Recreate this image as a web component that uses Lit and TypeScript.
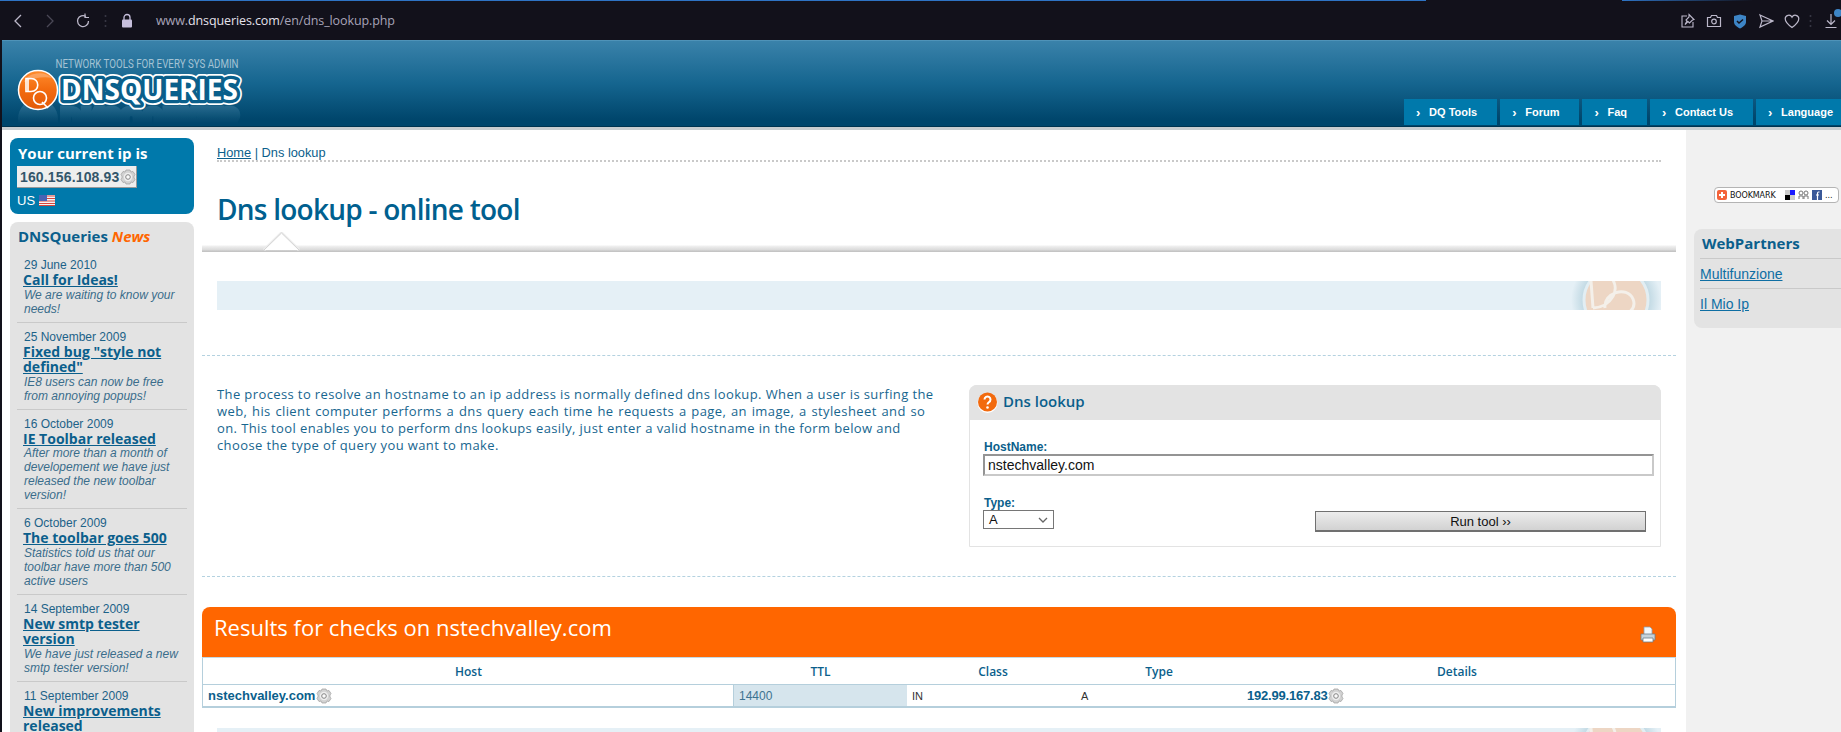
import { LitElement, css, html, svg } from 'lit';
import { customElement } from 'lit/decorators.js';

const news = [
	{ date: '29 June 2010', title: 'Call for Ideas!', text: 'We are waiting to know your needs!' },
	{ date: '25 November 2009', title: 'Fixed bug "style not defined"', text: 'IE8 users can now be free from annoying popups!' },
	{ date: '16 October 2009', title: 'IE Toolbar released', text: 'After more than a month of developement we have just released the new toolbar version!' },
	{ date: '6 October 2009', title: 'The toolbar goes 500', text: 'Statistics told us that our toolbar have more than 500 active users' },
	{ date: '14 September 2009', title: 'New smtp tester version', text: 'We have just released a new smtp tester version!' },
	{ date: '11 September 2009', title: 'New improvements released', text: '' },
];

const navItems = ['DQ Tools', 'Forum', 'Faq', 'Contact Us', 'Language'];

const gear = html`<svg class="gear" viewBox="0 0 16 16" width="16" height="16">
	<path d="M6 1h4l1 2 2-.5 2 3-1 1.500v2l1 1.500-2 3-2-.5-1 2H6l-1-2-2 .5-2-3 1-1.500V7L1 5.500l2-3 2 .5z" fill="#d2d2d2" stroke="#9c9c9c" stroke-width=".7"/>
	<circle cx="8" cy="8" r="4.200" fill="#efefef"/>
	<circle cx="8" cy="8" r="2.300" fill="#fafafa" stroke="#858585"/>
</svg>`;

const watermark = html`<svg class="mark" viewBox="0 0 100 29" width="100" height="29">
	<defs>
		<radialGradient id="halo">
			<stop offset=".75" stop-color="#c4dbe5"/>
			<stop offset="1" stop-color="#e5f0f6"/>
		</radialGradient>
	</defs>
	<circle cx="55" cy="19" r="45" fill="url(#halo)"/>
	<circle cx="55" cy="19" r="32" fill="#edd6c4" stroke="#e2eef3" stroke-width="3"/>
	<path d="M30 0 32 27M32 27C50 26 62 8 48-6M44 27C42 12 66 4 72 18 76 28 66 36 56 33" fill="none" stroke="#f4f0ea" stroke-width="3"/>
</svg>`;

const logo = svg`
	<defs>
		<text id="wordmark" x="61" y="99.500" font-family="Open Sans" font-weight="700" font-size="28" textLength="177" lengthAdjust="spacingAndGlyphs">DNSQUERIES</text>
		<linearGradient id="ball" x1="0" y1="0" x2="0" y2="1">
			<stop offset="0" stop-color="#ff8c2e"/>
			<stop offset=".5" stop-color="#f26a0e"/>
			<stop offset="1" stop-color="#e25a08"/>
		</linearGradient>
		<linearGradient id="fade" x1="0" y1="104" x2="0" y2="124" gradientUnits="userSpaceOnUse">
			<stop offset="0" stop-color="#fff" stop-opacity=".28"/>
			<stop offset="1" stop-color="#fff" stop-opacity="0"/>
		</linearGradient>
		<mask id="fadeMask" maskUnits="userSpaceOnUse" x="0" y="100" width="260" height="28"><rect x="0" y="104" width="260" height="22" fill="url(#fade)"/></mask>
	</defs>
	<text x="55.500" y="68" font-family="Roboto" font-size="13.500" fill="#a4c3d4" textLength="183" lengthAdjust="spacingAndGlyphs">NETWORK TOOLS FOR EVERY SYS ADMIN</text>
	<g mask="url(#fadeMask)">
		<g transform="translate(0 208) scale(1 -1)">
			<use href="#wordmark" fill="#7fb0cb" stroke="#7fb0cb" stroke-width="7"/>
			<circle cx="38" cy="89" r="20" fill="#7fb0cb"/>
		</g>
	</g>
	<use href="#wordmark" fill="none" stroke="#fff" stroke-width="10" stroke-linejoin="round"/>
	<use href="#wordmark" fill="none" stroke="#0a5f8b" stroke-width="6.500" stroke-linejoin="round"/>
	<use href="#wordmark" fill="#fff"/>
	<circle cx="38" cy="90" r="19.500" fill="url(#ball)" stroke="#fff" stroke-width="1.500"/>
	<path d="M24 82a16 12 0 0 1 28-4c-8-2-18 0-28 4z" fill="#fff" opacity=".25"/>
	<path d="M26 78.500h5c9 0 9 13 0 13h-5zM28 78v14" fill="none" stroke="#fff" stroke-width="1.600"/>
	<circle cx="40" cy="98" r="6.500" fill="none" stroke="#fff" stroke-width="1.600"/>
	<path d="M42 102l6 6" stroke="#fff" stroke-width="1.600"/>
`;

@customElement('app-root')
export class AppRoot extends LitElement {

	static styles = css`
		:host {
			display: block;
			width: 1841px;
			height: 732px;
			overflow: hidden;
			background: #fff;
			font-family: 'Liberation Sans', Arial, sans-serif;
			color: #0b5f8c;
		}
		* {
			box-sizing: border-box;
		}
		a {
			color: inherit;
		}
		.heading {
			font-family: 'Open Sans', sans-serif;
		}

		/* browser chrome */
		.chrome {
			height: 40px;
			background: #12111b;
		}
		.progress {
			display: flex;
			height: 1px;
		}
		.progress i:first-child {
			width: 1426px;
			background: #2e73c4;
		}
		.progress i:last-child {
			width: 219px;
			margin-left: 196px;
			background: linear-gradient(90deg, #2e73c4, #12111b 60%);
		}
		.bar {
			height: 39px;
			display: flex;
			align-items: center;
			padding-right: 2px;
			color: #bcb8ca;
		}
		.bar svg {
			display: block;
			flex: none;
		}
		.back {
			margin-left: 12px;
		}
		.forward {
			margin-left: 20px;
		}
		.reload {
			margin-left: 19px;
		}
		.divider {
			margin-left: 13px;
		}
		.lock {
			margin-left: 14px;
		}
		.url {
			margin-left: 23px;
			font-family: 'Open Sans', sans-serif;
			font-size: 12.500px;
			width: 300px;
			white-space: nowrap;
			color: #a8a4b8;
			letter-spacing: -.1px;
		}
		.url b {
			font-weight: 400;
			color: #e4e2ec;
		}
		.tools {
			margin-left: auto;
			display: flex;
			align-items: center;
			gap: 10px;
			position: relative;
		}
		.tools .divider {
			margin: 0 1px 0 -1px;
		}
		.dot {
			position: absolute;
			right: -3px;
			top: -4px;
			width: 8px;
			height: 8px;
			border-radius: 50%;
			background: #3d85c6;
		}

		.site {
			border-left: 2px solid #12111b;
		}

		/* blue header */
		.header {
			height: 87px;
			display: flex;
			justify-content: space-between;
			align-items: flex-end;
			padding-bottom: 1px;
			border-top: 1px solid #4f93b8;
			border-bottom: 1px solid #003450;
			background: linear-gradient(#3a82aa, #15658f 50%, #00466c 92%);
			position: relative;
			overflow: hidden;
		}
		.logo {
			position: absolute;
			left: -2px;
			top: -1px;
		}
		.nav {
			display: flex;
			gap: 3px;
			margin-left: auto;
			margin-right: -12px;
		}
		.nav a {
			height: 26px;
			display: flex;
			align-items: center;
			background: #0079ab;
			color: #fff;
			font-size: 11px;
			font-weight: 700;
			text-decoration: none;
			padding-left: 12px;
			padding-right: 20px;
			white-space: nowrap;
		}
		.nav span {
			width: 13px;
			font-size: 13px;
			line-height: 26px;
			padding-top: 1px;
		}
		.strip {
			height: 3px;
			background: #c9cdd0;
		}

		.page {
			display: flex;
			height: 602px;
		}

		/* left column */
		.left {
			width: 200px;
			flex: none;
			padding: 8px 0 0 8px;
		}
		.ip {
			width: 184px;
			height: 76px;
			border-radius: 8px;
			background: #0079ab;
			color: #fff;
			padding: 5px 7px 0 8px;
		}
		.ip h3 {
			margin: 0;
			font-size: 15px;
			line-height: 20px;
			font-weight: 700;
		}
		.chip {
			display: inline-flex;
			align-items: center;
			height: 22px;
			margin: 3px 0 0 -1px;
			padding-left: 3px;
			gap: 1px;
			background: #eee;
			border-bottom: 1px solid #999;
			border-right: 1px solid #999;
			color: #33566b;
			font-size: 14px;
			font-weight: 700;
			letter-spacing: .15px;
		}
		.geo {
			display: flex;
			align-items: center;
			gap: 4px;
			margin: 4px 0 0 -1px;
			font-size: 13px;
			line-height: 17px;
		}
		.news {
			width: 184px;
			margin-top: 8px;
			height: 510px;
			overflow: hidden;
			border-radius: 8px 8px 0 0;
			background: #e3e3e3;
			padding: 2px 7px 0;
		}
		.news h3 {
			margin: 0 0 10px 1px;
			font-size: 15px;
			line-height: 24px;
			font-weight: 700;
		}
		.news h3 em {
			color: #ff6600;
		}
		.item {
			padding: 0 7px 6px;
			margin-bottom: 7px;
			border-bottom: 1px solid #c9c9c9;
		}
		.item:last-child {
			border-bottom: 0;
		}
		.date {
			font-size: 12px;
			line-height: 14px;
			color: #1c6288;
		}
		.item a {
			display: block;
			margin-left: -1px;
			font-size: 14px;
			line-height: 15.500px;
			font-weight: 700;
		}
		.item p {
			margin: 0;
			font-size: 12px;
			line-height: 14px;
			font-style: italic;
			color: #3a6d8b;
		}

		/* main column */
		.main {
			width: 1484px;
			flex: none;
			padding-right: 10px;
		}
		.crumb {
			margin: 15px 15px 0;
			height: 17px;
			line-height: 16px;
			font-size: 12.800px;
			border-bottom: 2px dotted #c9c9c9;
		}
		h1 {
			margin: 29px 15px 0;
			font-size: 28px;
			line-height: 36px;
			font-weight: 600;
			color: #00608f;
			letter-spacing: -.75px;
		}
		.rule {
			height: 25px;
			position: relative;
			background: linear-gradient(transparent 18px, #f0f0f0 19px, #d9d9d9 23px, #c4c4c4 24px);
		}
		.rule svg {
			position: absolute;
			left: 60px;
			top: 5px;
		}
		.banner {
			height: 29px;
			margin: 29px 15px 0;
			background: #e5f0f6;
			display: flex;
			justify-content: flex-end;
			overflow: hidden;
		}
		.dash {
			border-top: 1px dashed #b4d2e0;
		}
		.upper {
			margin-top: 45px;
		}
		.intro {
			display: flex;
			justify-content: space-between;
			margin-top: 29px;
			padding: 0 15px;
		}
		.intro p {
			margin: 0;
			padding-top: 1px;
			white-space: nowrap;
			font-size: 13px;
			line-height: 17px;
			letter-spacing: .39px;
			color: #17668f;
		}
		.loose {
			word-spacing: 1px;
		}
		.box {
			width: 692px;
			height: 162px;
			border: 1px solid #e3e3e3;
			border-radius: 8px 8px 0 0;
		}
		.box header {
			height: 35px;
			margin: -1px -1px 0;
			padding: 0 0 3px 8px;
			display: flex;
			align-items: center;
			gap: 5px;
			background: #e3e3e3;
			border-radius: 8px 8px 0 0;
			font-size: 15px;
			font-weight: 600;
		}
		.box header svg {
			margin-top: 3px;
		}
		.form {
			display: grid;
			grid-template-columns: 332px 1fr;
			padding: 20px 7px 0 14px;
		}
		.form label {
			display: block;
			font-size: 12px;
			line-height: 14px;
			font-weight: 700;
		}
		.wide {
			grid-column: 1 / 3;
			margin-bottom: 20px;
		}
		.input {
			width: 671px;
			height: 22px;
			margin-left: -1px;
			border: 2px solid #c9c9c9;
			border-top-color: #949494;
			border-left-color: #949494;
			font: 14px 'Liberation Sans', Arial, sans-serif;
			padding: 0 3px;
			color: #111;
			background: #fff;
			outline: 0;
		}
		.select {
			width: 71px;
			height: 19px;
			margin-left: -1px;
			display: flex;
			align-items: center;
			justify-content: space-between;
			padding: 0 5px;
			border: 1px solid #767676;
			font-size: 13px;
			color: #111;
		}
		.run {
			width: 331px;
			height: 21px;
			margin: 15px 0 0 -1px;
			border: 1px solid #707070;
			border-width: 1px 1px 2px;
			background: linear-gradient(#ececec, #d2d2d2);
			font: 13px 'Liberation Sans', Arial, sans-serif;
			color: #111;
			padding: 1px 0 0;
		}
		.lower {
			margin-top: 29px;
		}
		.results {
			margin-top: 30px;
		}
		.results header {
			height: 50px;
			display: flex;
			justify-content: space-between;
			padding: 6px 20px 0 12px;
			border-radius: 8px 8px 0 0;
			background: #ff6600;
			color: #fff;
			font-size: 22px;
			line-height: 29px;
		}
		.results header svg {
			margin-top: 13px;
		}
		.table {
			border: 1px solid #b5cfdc;
			border-top: 1px solid #c4d8e2;
			border-bottom-width: 2px;
		}
		.row {
			display: grid;
			grid-template-columns: 531px 173px 172px 160px 1fr;
			align-items: center;
		}
		.row.head {
			height: 27px;
			border-bottom: 1px solid #b5cfdc;
			text-align: center;
			font-size: 12px;
			font-weight: 600;
		}
		.row.data {
			height: 21px;
			font-size: 11px;
			color: #333;
		}
		.row.data > div {
			height: 100%;
			display: flex;
			align-items: center;
			padding-left: 5px;
		}
		.row.data .host {
			font-size: 13px;
			font-weight: 700;
			color: #0b5f8c;
			gap: 1px;
			border-right: 1px solid #b5cfdc;
		}
		.row.data .ttl {
			background: #d6e5ed;
			color: #3d7391;
			font-size: 12px;
		}
		.row.data .kind {
			padding-left: 2px;
		}
		.row.data .addr {
			padding-left: 8px;
			font-size: 13px;
			font-weight: 700;
			color: #0b5f8c;
			letter-spacing: -.2px;
		}
		.next {
			margin-top: 20px;
		}

		/* right column */
		.right {
			width: 155px;
			flex: none;
			background: #f1f1f1;
			padding: 57px 0 0 8px;
		}
		.share {
			width: 125px;
			height: 16px;
			margin-left: 20px;
			display: flex;
			align-items: center;
			gap: 3px;
			padding: 0 2px;
			border: 1px solid #b4b4b4;
			border-radius: 4px;
			background: #fff;
			font-family: 'DejaVu Sans', sans-serif;
			font-size: 8px;
			color: #111;
			overflow: hidden;
			white-space: nowrap;
		}
		.share svg {
			flex: none;
		}
		.share .label {
			width: 52px;
			letter-spacing: -.1px;
		}
		.partners {
			height: 99px;
			margin-top: 26px;
			padding: 2px 0 0 6px;
			border-radius: 8px 0 0 8px;
			background: #e3e3e3;
		}
		.partners h3 {
			margin: 0;
			padding-left: 2px;
			height: 28px;
			font-size: 15px;
			line-height: 24px;
			font-weight: 700;
			border-bottom: 1px solid #c9c9c9;
		}
		.partners a {
			display: block;
			height: 29px;
			font-size: 14px;
			line-height: 30px;
			color: #0e6ea3;
		}
		.partners .sep {
			border-bottom: 1px solid #c9c9c9;
		}
	`

render() {
	return html`
		<div class="chrome">
			<div class="progress"><i></i><i></i></div>
			<div class="bar">
				<svg class="back" width="12" height="16" viewBox="0 0 12 16" fill="none" stroke="#bcb8ca" stroke-width="1.300"><path d="M9 2 3 8l6 6"/></svg>
				<svg class="forward" width="12" height="16" viewBox="0 0 12 16" fill="none" stroke="#4a4856" stroke-width="1.300"><path d="m3 2 6 6-6 6"/></svg>
				<svg class="reload" width="16" height="16" viewBox="0 0 16 16" fill="none" stroke="#bcb8ca" stroke-width="1.300"><path d="M13.500 8A5.500 5.500 0 1 1 11 3.500"/><path d="M10 .5v4h4" stroke-width="1.200"/></svg>
				<svg class="divider" width="3" height="14" viewBox="0 0 3 14" fill="#3a3946"><circle cx="1.500" cy="2" r="1"/><circle cx="1.500" cy="7" r="1"/><circle cx="1.500" cy="12" r="1"/></svg>
				<svg class="lock" width="12" height="15" viewBox="0 0 12 15"><path d="M3 7V4.500a3 3 0 0 1 6 0V7" fill="none" stroke="#c6bfdc" stroke-width="1.300"/><rect x="1" y="6.500" width="10" height="8" rx="1" fill="#c6bfdc"/></svg>
				<div class="url">www.<b>dnsqueries.com</b>/en/dns_lookup.php</div>
				<div class="tools">
					<svg width="16" height="16" viewBox="0 0 16 16" fill="none" stroke="#bcb8ca" stroke-width="1.100"><path d="M7 3H2v11h11V9"/><path d="m9 1.500 5 5-1.500 .5L9.500 10 8 8.500l-3 3 2-3.500-1-1 3-3z"/></svg>
					<svg width="16" height="16" viewBox="0 0 16 16" fill="none" stroke="#bcb8ca" stroke-width="1.200"><path d="M1.500 4.500h3l1-2h5l1 2h3v9h-13z"/><circle cx="8" cy="8.500" r="2.300"/></svg>
					<svg width="16" height="16" viewBox="0 0 16 16"><path d="M8 1.500 14 3v6c0 3-3 5-6 6.500C5 14 2 12 2 9V3z" fill="#3d85c6"/><path d="m5 8 2 2 4-3.500" fill="none" stroke="#12111b" stroke-width="1.500"/></svg>
					<svg width="16" height="16" viewBox="0 0 16 16" fill="none" stroke="#bcb8ca" stroke-width="1.200"><path d="m2 2 13 6-13 6 2-6zM4 8h11"/></svg>
					<svg width="16" height="16" viewBox="0 0 16 16" fill="none" stroke="#bcb8ca" stroke-width="1.200"><path d="M8 14.500C3 11 1.200 8.500 1.200 5.800A3.600 3.600 0 0 1 8 4.200a3.600 3.600 0 0 1 6.800 1.600C14.800 8.500 13 11 8 14.500z"/></svg>
					<svg class="divider" width="3" height="14" viewBox="0 0 3 14" fill="#3a3946"><circle cx="1.500" cy="2" r="1"/><circle cx="1.500" cy="7" r="1"/><circle cx="1.500" cy="12" r="1"/></svg>
					<svg width="16" height="16" viewBox="0 0 16 16" fill="none" stroke="#bcb8ca" stroke-width="1.200"><path d="M8 1v10M4 7.500 8 11.500l4-4M2.500 14.500h11"/></svg>
					<i class="dot"></i>
				</div>
			</div>
		</div>
		<div class="site">
			<div class="header">
				<svg class="logo" width="260" height="88" viewBox="0 40 260 88">${logo}</svg>
				<nav class="nav">
					${navItems.map(item => html`<a href="#"><span>›</span>${item}</a>`)}
				</nav>
			</div>
			<div class="strip"></div>
			<div class="page">
				<aside class="left">
					<div class="ip">
						<h3 class="heading">Your current ip is</h3>
						<div class="chip">160.156.108.93 ${gear}</div>
						<div class="geo">US
							<svg width="16" height="11" viewBox="0 0 16 11">
								<rect width="16" height="11" fill="#f4f4f4"/>
								<path d="M0 1h16M0 3.500h16M0 6h16M0 8.500h16M0 10.500h16" stroke="#d8453c" stroke-width="1.200"/>
								<rect width="8" height="6" fill="#4a63b4"/>
							</svg>
						</div>
					</div>
					<div class="news">
						<h3 class="heading">DNSQueries <em>News</em></h3>
						${news.map(item => html`
							<div class="item">
								<div class="date">${item.date}</div>
								<a class="heading" href="#">${item.title}</a>
								<p>${item.text}</p>
							</div>
						`)}
					</div>
				</aside>
				<main class="main">
					<div class="crumb"><a href="#">Home</a> | Dns lookup</div>
					<h1 class="heading">Dns lookup - online tool</h1>
					<div class="rule">
						<svg width="40" height="20" viewBox="0 0 40 20">
							<path d="M2 18 19.500 1 37 18" fill="none" stroke="#ececec" stroke-width="3"/>
							<path d="M2 18 19.500 1 37 18" fill="#fff" stroke="#d4d4d4" stroke-width="1"/>
						</svg>
					</div>
					<div class="banner">${watermark}</div>
					<div class="dash upper"></div>
					<div class="intro">
						<p class="heading">The process to resolve an hostname to an ip address is normally defined dns lookup. When a user is surfing the<br><span class="loose">web, his client computer performs a dns query each time he requests a page, an image, a stylesheet and so</span><br>on. This tool enables you to perform dns lookups easily, just enter a valid hostname in the form below and<br>choose the type of query you want to make.</p>
						<section class="box">
							<header class="heading">
								<svg width="21" height="24" viewBox="0 0 21 24">
									<circle cx="10.500" cy="12" r="10" fill="#fff"/>
									<circle cx="10.500" cy="11" r="9.500" fill="#f26a0e"/>
									<path d="M7.500 8.500a3 3 0 1 1 4.500 2.600c-1 .6-1.500 1.200-1.500 2.400" fill="none" stroke="#fff" stroke-width="2"/>
									<circle cx="10.500" cy="16.500" r="1.300" fill="#fff"/>
								</svg>
								Dns lookup
							</header>
							<div class="form">
								<div class="wide">
									<label>HostName:</label>
									<input class="input" value="nstechvalley.com">
								</div>
								<div>
									<label>Type:</label>
									<div class="select">A
										<svg width="10" height="6" viewBox="0 0 10 6" fill="none" stroke="#666" stroke-width="1.300"><path d="m1 1 4 4 4-4"/></svg>
									</div>
								</div>
								<button class="run">Run tool ››</button>
							</div>
						</section>
					</div>
					<div class="dash lower"></div>
					<section class="results">
						<header class="heading">
							Results for checks on nstechvalley.com
							<svg width="16" height="17" viewBox="0 0 16 17">
								<path d="M4 1h6l2 2v6H4z" fill="#f4f7fa" stroke="#8aa2b4" stroke-width=".8"/>
								<path d="M1 8h14v6H1z" fill="#c6d2da" stroke="#6d7f8c" stroke-width=".8"/>
								<path d="M3 12h10v4H3z" fill="#fff" stroke="#6d7f8c" stroke-width=".8"/>
							</svg>
						</header>
						<div class="table">
							<div class="row head heading">
								<div>Host</div><div>TTL</div><div>Class</div><div>Type</div><div>Details</div>
							</div>
							<div class="row data">
								<div class="host">nstechvalley.com ${gear}</div>
								<div class="ttl">14400</div>
								<div>IN</div>
								<div class="kind">A</div>
								<div class="addr">192.99.167.83 ${gear}</div>
							</div>
						</div>
					</section>
					<div class="banner next">${watermark}</div>
				</main>
				<aside class="right">
					<div class="share">
						<svg width="10" height="10" viewBox="0 0 10 10"><rect width="10" height="10" rx="2" fill="#f4633a"/><path d="M5 2v6M2 5h6" stroke="#fff" stroke-width="2"/></svg>
						<span class="label">BOOKMARK</span>
						<svg width="10" height="10" viewBox="0 0 10 10"><rect width="10" height="10" fill="#ccc"/><rect x="5" width="5" height="5" fill="#1a1aff"/><rect y="5" width="5" height="5" fill="#000"/></svg>
						<svg width="11" height="10" viewBox="0 0 11 10" fill="none" stroke="#777" stroke-width="1"><circle cx="3" cy="3" r="2"/><circle cx="8" cy="3" r="2"/><path d="M1 9V6h4v3M6 9V6h4v3"/></svg>
						<svg width="10" height="10" viewBox="0 0 10 10"><rect width="10" height="10" fill="#3b5998"/><path d="M7.500 2H6.500C6 2 5.500 2.500 5.500 3.500V10M4 5h3" stroke="#fff" stroke-width="1.200" fill="none"/></svg>
						<span>...</span>
					</div>
					<div class="partners">
						<h3 class="heading">WebPartners</h3>
						<div class="sep"><a href="#">Multifunzione</a></div>
						<a href="#">Il Mio Ip</a>
					</div>
				</aside>
			</div>
		</div>
	`
}

}

declare global {
	interface HTMLElementTagNameMap {
		'app-root': AppRoot
	}
}
